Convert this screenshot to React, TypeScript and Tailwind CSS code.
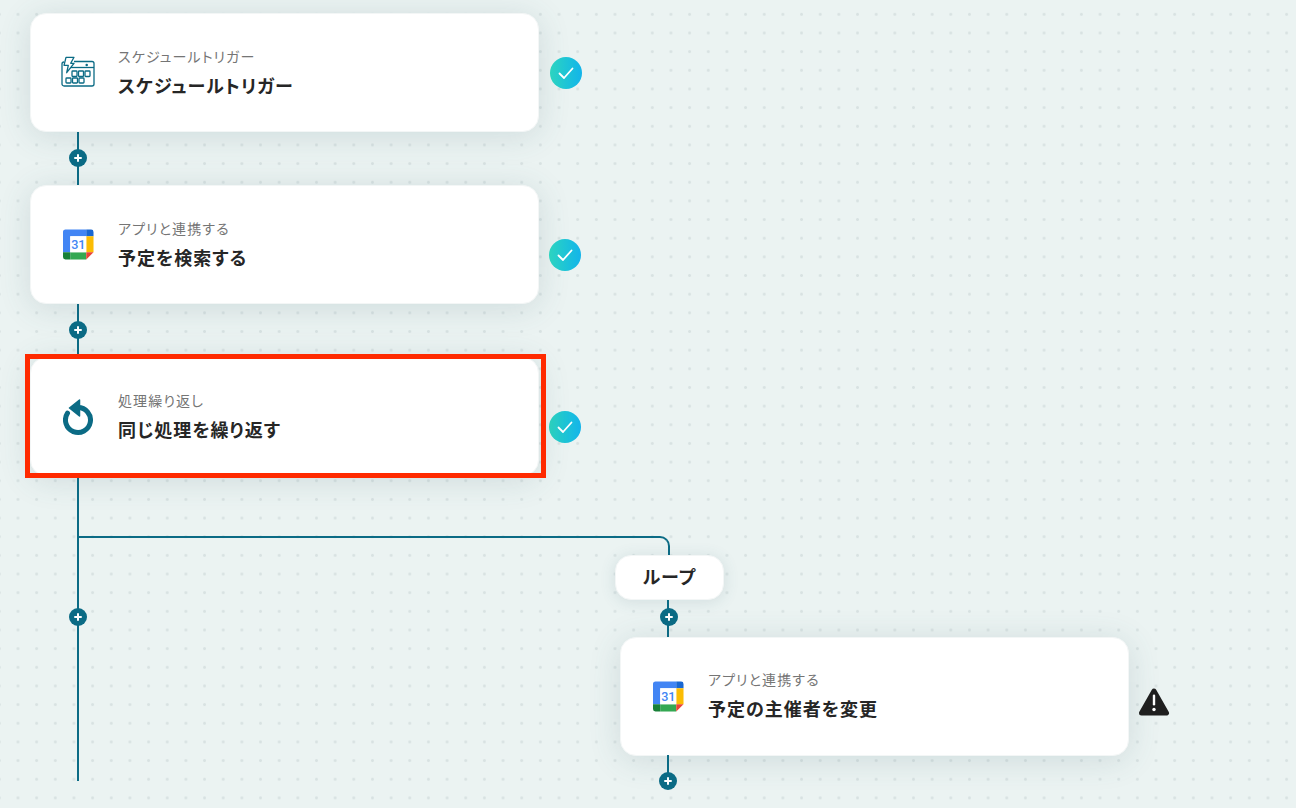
import React from 'react';

const jpFont = "[font-family:'Noto_Sans_CJK_JP','Noto_Sans',sans-serif]";

const ScheduleIcon = () => (
  <svg className="-mt-[2px] -ml-[2px]" width="34" height="31" viewBox="0 0 34 31" fill="none" stroke="#0b6b85" strokeWidth="1.300" strokeLinejoin="round">
    <path d="M13 5.500h18a2 2 0 0 1 2 2v20.500a2 2 0 0 1-2 2h-28a2 2 0 0 1-2-2v-20a2 2 0 0 1 2-2" />
    <path d="M8 11.500h25" />
    <path d="M5 1.300h8l-3.300 6h3.300l-7.300 9.400 1.600-7.400h-4.300z" fill="#fff" />
    <circle cx="25.700" cy="9" r="0.600" fill="#0b6b85" />
    <rect x="11" y="15" width="5" height="5.500" rx="0.800" />
    <rect x="17.500" y="15" width="5" height="5.500" rx="0.800" />
    <rect x="24" y="15" width="5" height="5.500" rx="0.800" />
    <rect x="5" y="22" width="5" height="5" rx="0.800" />
    <rect x="11.500" y="22" width="5" height="5" rx="0.800" />
    <rect x="18" y="22" width="5" height="5" rx="0.800" />
  </svg>
);

const CalendarIcon = () => (
  <svg width="31" height="31" viewBox="0 0 32 32">
    <path d="M3 0.500h21v7h-16.500v16.500h-7.500v-21a2.500 2.500 0 0 1 3-2.500z" fill="#4285f4" />
    <path d="M24 0.500h5a2.500 2.500 0 0 1 2.500 2.500v4.500h-7.500z" fill="#1967d2" />
    <rect x="24" y="7.500" width="7.500" height="16.500" fill="#fbbc04" />
    <rect x="7.500" y="24" width="16.500" height="7.500" fill="#34a853" />
    <path d="M0 24h7.500v7.500h-5a2.500 2.500 0 0 1-2.500-2.500z" fill="#188038" />
    <path d="M24 24h7.500l-7.500 7.500z" fill="#ea4335" />
    <rect x="7.500" y="7.500" width="16.500" height="16.500" fill="#fff" />
    <text x="15.800" y="20.700" textAnchor="middle" fontSize="13" fontWeight="500" fill="#4285f4" fontFamily="Roboto, sans-serif">31</text>
  </svg>
);

const LoopIcon = () => (
  <svg className="mt-[3px]" width="30" height="38" viewBox="0 0 30 38" fill="none">
    <path d="M4.500 14.200A12.500 12.500 0 1 0 15 8.500" stroke="#0b6b85" strokeWidth="5" strokeLinecap="round" />
    <path d="M6.500 9l10-8v16z" fill="#0b6b85" stroke="#0b6b85" strokeWidth="1.500" strokeLinejoin="round" />
  </svg>
);

const CheckBadge = ({ className }: { className?: string }) => (
  <div className={`flex h-8 w-8 items-center justify-center rounded-full bg-gradient-to-r from-[#2dd4bf] to-[#14b4ea] ${className ?? ''}`}>
    <svg width="18" height="18" viewBox="0 0 18 18" fill="none" stroke="#fff" strokeWidth="1.800" strokeLinecap="round" strokeLinejoin="round">
      <path d="M2.500 9.500l4.500 4.500 8.500-9.500" />
    </svg>
  </div>
);

const WarningIcon = () => (
  <svg className="mt-[10px] -ml-[1px]" width="32" height="30" viewBox="0 0 32 30">
    <path d="M16 4l12.500 22h-25z" fill="#1f1f1f" stroke="#1f1f1f" strokeWidth="5" strokeLinejoin="round" />
    <rect x="14.800" y="7.500" width="2.400" height="11" rx="1.200" fill="#fff" />
    <circle cx="16" cy="22.500" r="1.700" fill="#fff" />
  </svg>
);

const PlusDot = () => (
  <div className="flex h-[18px] w-[18px] items-center justify-center rounded-full bg-[#0b6b85]">
    <svg width="8" height="8" viewBox="0 0 8 8" stroke="#fff" strokeWidth="2" strokeLinecap="round">
      <path d="M4 1v6M1 4h6" />
    </svg>
  </div>
);

// vertical line with the plus dot centred on it
const Connector = () => (
  <div className="ml-[39px] flex h-[53px] w-[18px] items-center justify-center bg-[linear-gradient(#0b6b85,#0b6b85)] bg-[length:2px_100%] bg-center bg-no-repeat pb-[1px]">
    <PlusDot />
  </div>
);

const StepCard = ({ icon, label, title, textClass }: { icon: React.ReactNode; label: string; title: string; textClass: string }) => (
  <div className="flex h-[119px] w-[509px] items-center rounded-2xl border border-[#f3f6f6] bg-white shadow-[0_4px_32px_rgba(60,100,110,0.16)]">
    <div className="flex w-[87px] shrink-0 pl-[32px]">{icon}</div>
    <div className={textClass}>
      <div className="text-[14px] leading-[20px] tracking-[1.100px] text-[#757575] [font-feature-settings:'palt']">{label}</div>
      <div className="mt-[7px] text-[18px] leading-[24px] font-bold tracking-[1px] text-[#262626] [font-feature-settings:'palt']">{title}</div>
    </div>
  </div>
);

const App = () => {
  return (
    <div className={`relative h-[808px] w-[1296px] overflow-hidden bg-[#ebf3f2] bg-[radial-gradient(circle,#d8e2e2_1.2px,transparent_1.6px)] bg-[length:18.67px_18.67px] bg-[position:-10px_5px] pt-[13px] pl-[30px] ${jpFont}`}>
      {/* main column */}
      <div className="flex items-center gap-[11px]">
        <StepCard icon={<ScheduleIcon />} label="スケジュールトリガー" title="スケジュールトリガー" textClass="-mt-[2px]" />
        <CheckBadge />
      </div>
      <Connector />
      <div className="flex items-center gap-[10px]">
        <StepCard icon={<CalendarIcon />} label="アプリと連携する" title="予定を検索する" textClass="-mt-[2px]" />
        <CheckBadge className="mt-[21px]" />
      </div>
      <Connector />
      <div className="flex items-center gap-[10px]">
        <div className="relative">
          <StepCard icon={<LoopIcon />} label="処理繰り返し" title="同じ処理を繰り返す" textClass="-mt-[2px]" />
          <div className="absolute -top-[3px] -right-[7px] -bottom-[2px] -left-[5px] border-[5px] border-[#ff2a00]" />
        </div>
        <CheckBadge className="mt-[21px]" />
      </div>

      {/* main line continuing below the loop step */}
      <div className="absolute top-[478px] left-[77px] h-[303px] w-[2px] bg-[#0b6b85]" />
      <div className="absolute top-[608px] left-[69px]">
        <PlusDot />
      </div>

      {/* loop branch */}
      <div className="absolute top-[536px] left-[78px] h-[24px] w-[592px] rounded-tr-[10px] border-t-2 border-r-2 border-[#0b6b85]" />
      <div className="absolute top-[555px] left-[615px] flex h-[45px] w-[109px] items-center justify-center rounded-2xl border border-[#f3f6f6] bg-white pb-[2px] text-[18px] font-bold tracking-[1px] text-[#262626] shadow-[0_2px_16px_rgba(60,100,110,0.14)] [font-feature-settings:'palt']">
        ループ
      </div>
      <div className="absolute top-[600px] left-[667px] h-[37px] w-[2px] bg-[#0b6b85]" />
      <div className="absolute top-[608px] left-[660px]">
        <PlusDot />
      </div>
      <div className="absolute top-[637px] left-[620px] flex items-center gap-[10px]">
        <StepCard icon={<CalendarIcon />} label="アプリと連携する" title="予定の主催者を変更" textClass="-mt-[5px]" />
        <WarningIcon />
      </div>
      <div className="absolute top-[755px] left-[667px] h-[26px] w-[2px] bg-[#0b6b85]" />
      <div className="absolute top-[772px] left-[659px]">
        <PlusDot />
      </div>
    </div>
  );
};

export default App;
